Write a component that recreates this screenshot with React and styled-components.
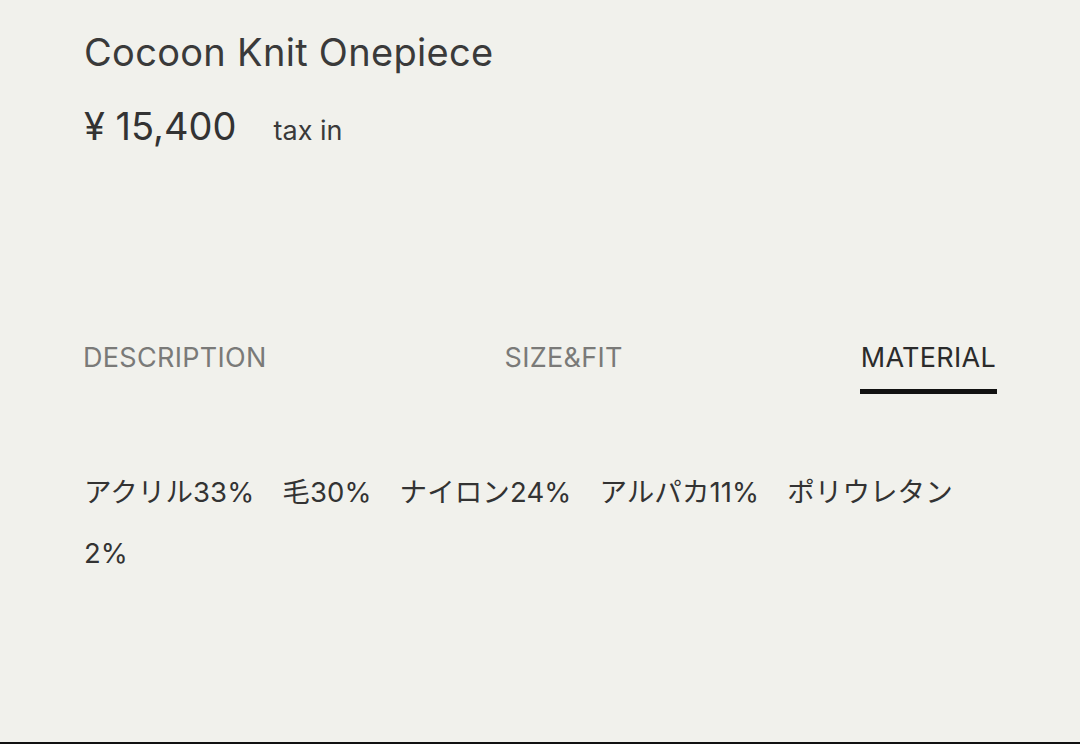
import React from "react";
import styled, { createGlobalStyle } from "styled-components";

const GlobalStyle = createGlobalStyle`
  html, body {
    margin: 0;
    padding: 0;
    background: #f1f1ec;
  }
  body {
    font-family: Inter, "Noto Sans CJK JP", sans-serif;
    color: #333;
  }
`;

const Page = styled.div`
  width: 1080px;
  height: 744px;
  box-sizing: border-box;
  padding: 28px 84px 0;
  border-bottom: 2px solid #111;
  overflow: hidden;
`;

const Title = styled.h1`
  margin: 0;
  font-size: 38px;
  font-weight: 400;
  line-height: 48px;
  letter-spacing: 0.3px;
  color: #3a3a3a;
`;

const PriceRow = styled.div`
  display: flex;
  align-items: baseline;
  gap: 37px;
  margin-top: 27px;
  line-height: 46px;
`;

const Price = styled.span`
  font-size: 38px;
  font-weight: 400;
  color: #333;
`;

const Tax = styled.span`
  font-size: 27px;
  color: #3a3a3a;
`;

const Tabs = styled.div`
  display: flex;
  justify-content: space-between;
  margin: 188px 0 0 -2px;
  width: 915px;
`;

const Tab = styled.div`
  font-size: 27px;
  line-height: 32px;
  letter-spacing: 0.3px;
  color: ${(p) => (p.active ? "#2b2b2b" : "#7a7a78")};
  padding: 0 1px 15px;
  border-bottom: 5px solid ${(p) => (p.active ? "#111" : "transparent")};
`;

const Material = styled.p`
  margin: 68px 0 0;
  width: 905px;
  font-size: 27.5px;
  line-height: 61px;
  letter-spacing: 0.1px;
  color: #333;
`;

const Gap = styled.span`
  display: inline-block;
  width: 28px;
`;

const materials = ["アクリル33%", "毛30%", "ナイロン24%", "アルパカ11%", "ポリウレタン2%"];

export default function App() {
  return (
    <>
      <GlobalStyle />
      <Page>
        <Title>Cocoon Knit Onepiece</Title>
        <PriceRow>
          <Price>¥ 15,400</Price>
          <Tax>tax in</Tax>
        </PriceRow>
        <Tabs>
          <Tab>DESCRIPTION</Tab>
          <Tab>SIZE&amp;FIT</Tab>
          <Tab active>MATERIAL</Tab>
        </Tabs>
        <Material>
          {materials.map((m, i) => (
            <React.Fragment key={m}>
              {i > 0 && <Gap />}
              {m}
            </React.Fragment>
          ))}
        </Material>
      </Page>
    </>
  );
}
